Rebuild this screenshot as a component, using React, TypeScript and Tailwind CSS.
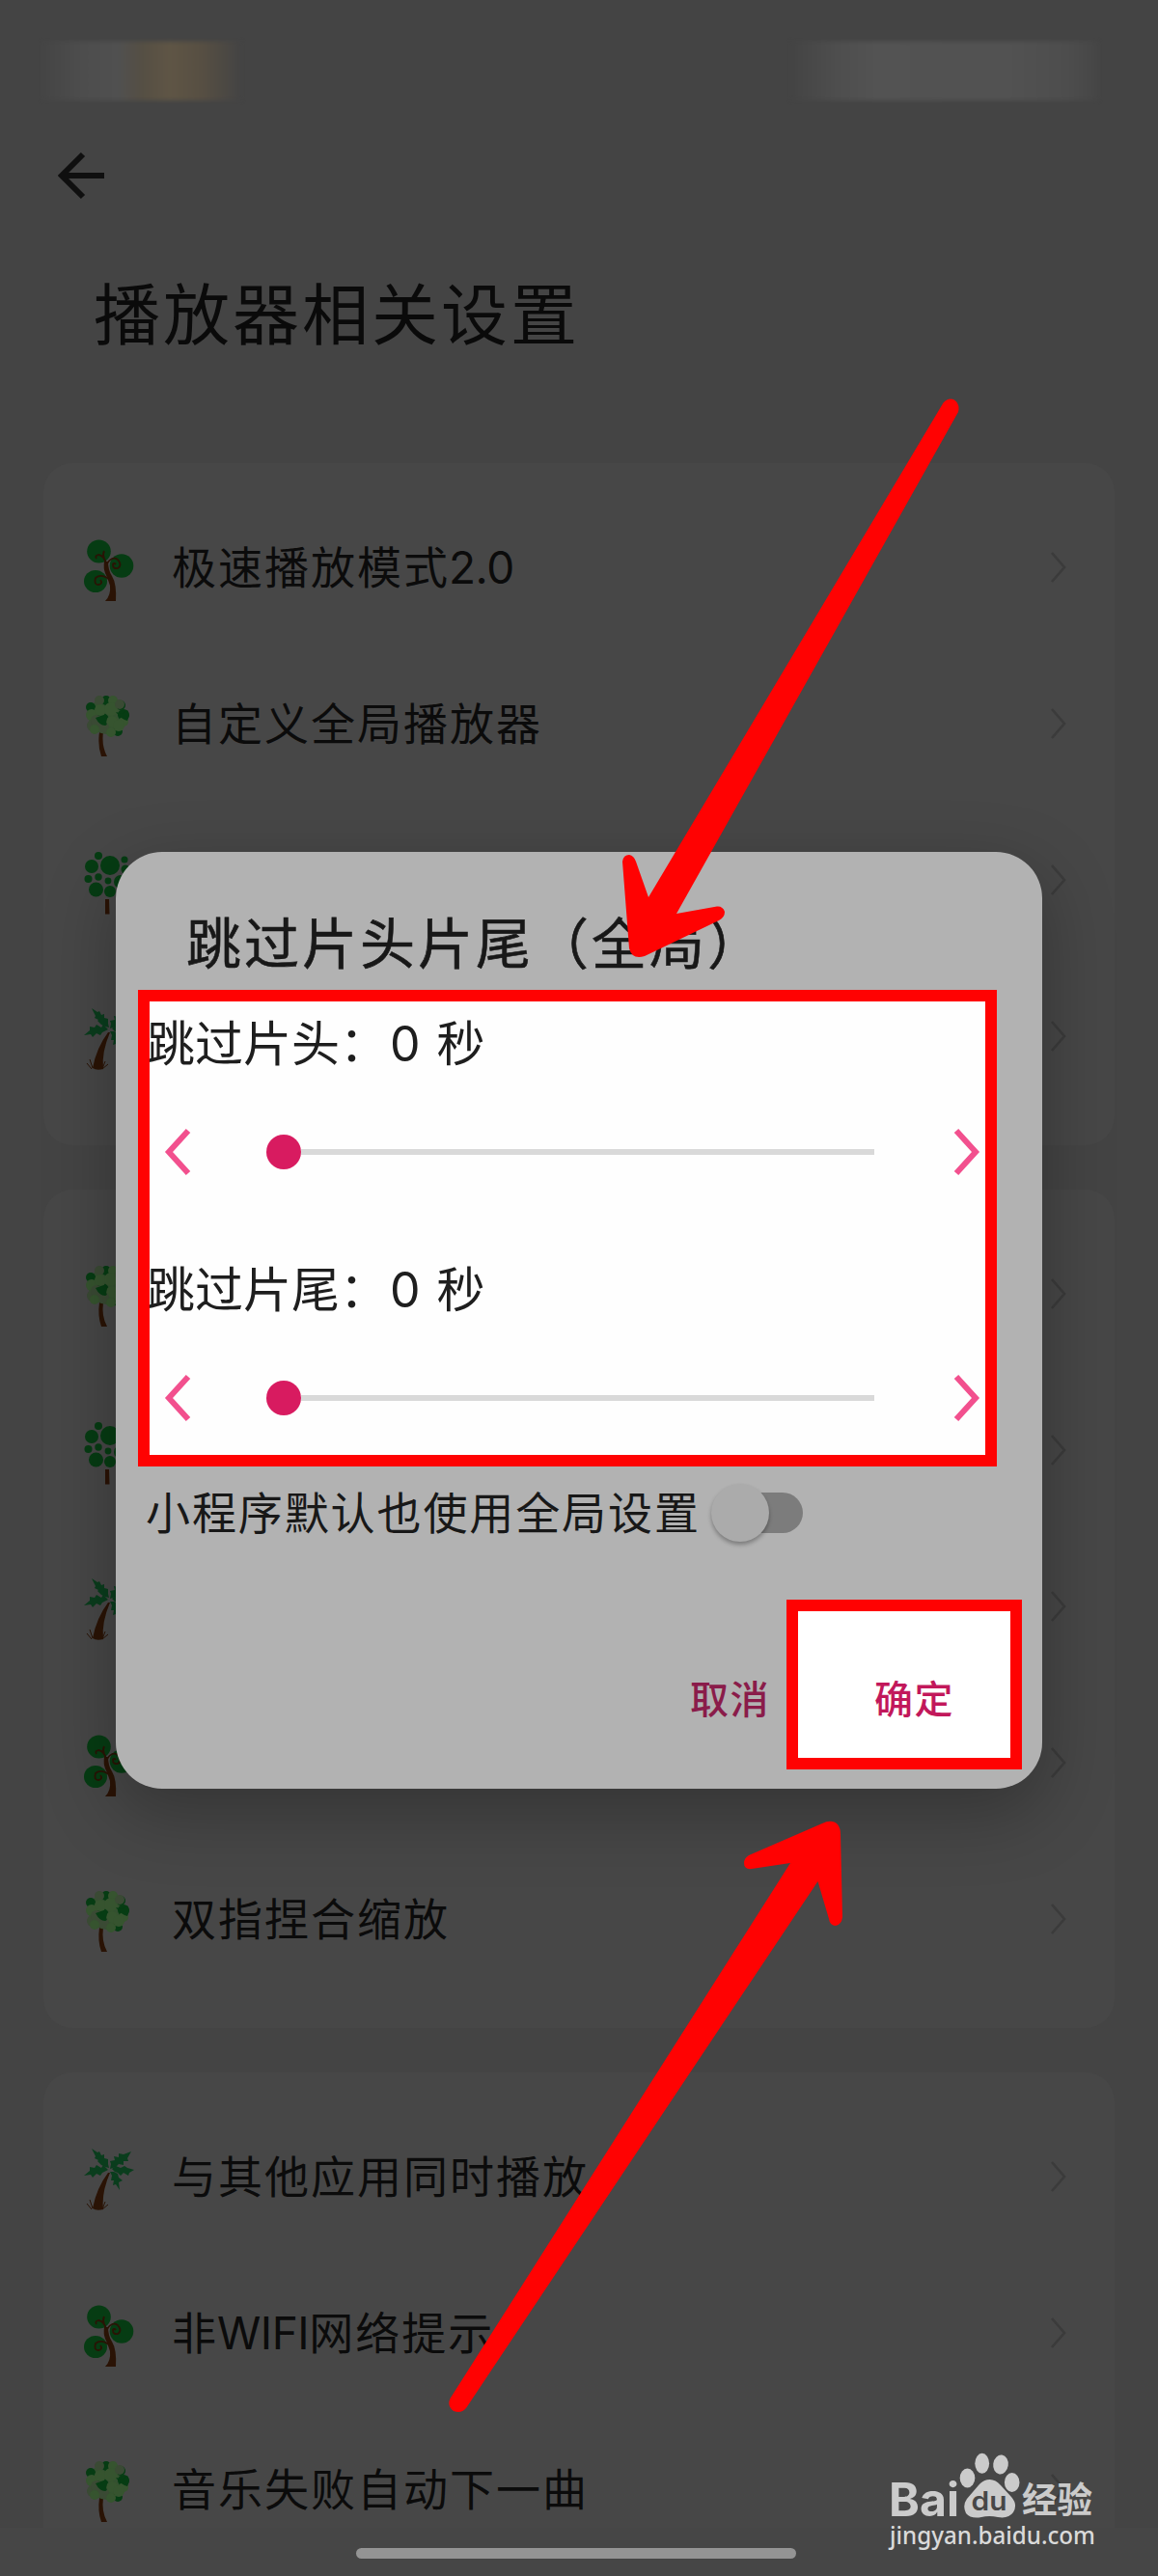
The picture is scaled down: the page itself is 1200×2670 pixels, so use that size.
import { ReactNode } from "react";

function CurlyTree() {
  return (
    <svg viewBox="0 0 52 66" className="mt-[7px] h-[66px] w-[52px]">
      <g fill="#063c13">
        <ellipse cx="15.5" cy="12.5" rx="12.3" ry="12" />
        <ellipse cx="39" cy="27.5" rx="12.3" ry="12.2" />
        <ellipse cx="12" cy="43.5" rx="12" ry="11.5" />
      </g>
      <path d="M22 64 Q28 58 27 48 Q25 41 22 35 Q20 30 21 23 L25 23 Q25 32 29 38 Q34 46 33 64Z" fill="#2a1305" />
      <g fill="none" stroke="#2a1305" strokeWidth="1.8">
        <path d="M23 25 Q21 17 15 16 Q11 17 13 20 M21 20 Q19 16 21 12" />
        <path d="M24 25 Q29 17 35 21 Q40 27 35 30 Q30 31 30 26 Q31 24 33 26" />
        <path d="M27 42 Q18 35 12 40 Q10 47 15 47 Q20 46 17 42" />
      </g>
    </svg>
  );
}

const LEAVES = [
  [16, 5, 5], [30, 5, 5], [8, 20, 6], [9, 31, 6], [17, 15, 6], [28, 14, 7], [37, 9, 5],
  [41, 27, 5], [29, 27, 6], [20, 33, 6], [28, 38, 5], [36, 31, 6], [13, 26, 6], [11, 35, 5],
];

function RoundTree() {
  return (
    <svg viewBox="0 0 52 66" className="mt-[7px] h-[66px] w-[52px]">
      <path d="M16 38 Q14 52 18 63 L24 63 Q18 52 20 38Z" fill="#2a1305" />
      <circle cx="24" cy="21" r="19" fill="#345030" />
      <g fill="#063c13">
        <circle cx="23" cy="5" r="5" />
        <circle cx="7" cy="12" r="5" />
        <circle cx="41" cy="20" r="6" />
        <circle cx="35" cy="37" r="5" />
        <circle cx="19" cy="25" r="7" />
        <circle cx="38" cy="10" r="5" />
      </g>
      {LEAVES.map(([x, y, r], i) => (
        <circle key={i} cx={x} cy={y} r={r} fill={i % 3 === 0 ? "#3a4a34" : "#36542f"} />
      ))}
      <path d="M12 23 Q18 20 24 22 L23 28 Q25 30 22 31 Q16 31 12 23Z" fill="#063c13" />
      <path d="M33 17 Q41 20 45 15 Q48 21 45 26 Q39 25 33 17Z" fill="#063c13" />
    </svg>
  );
}

const DOTS = [
  [8, 15, 7], [15, 4, 4], [27, 14, 10], [42, 8, 3.5], [43, 18, 4.5], [4.5, 28, 4],
  [15, 26, 3.7], [25, 30, 3.4], [38, 31, 7], [12.5, 39, 7.5], [27, 41, 6],
];

function DotTree() {
  return (
    <svg viewBox="0 0 52 66" className="mt-[7px] h-[66px] w-[52px]">
      {DOTS.map(([x, y, r], i) => (
        <circle key={i} cx={x} cy={y} r={r} fill="#063c13" />
      ))}
      <path d="M22 49 H26 L26.5 64.5 H22Z" fill="#2a1305" />
    </svg>
  );
}

function PalmTree() {
  return (
    <svg viewBox="0 0 52 66" className="mt-[7px] h-[66px] w-[52px]">
      <g fill="#0a3d1d">
        <path d="M26 20 L22 19 L18 17 L14 13 L15 12 L11 10 L12 8 L8 0 L14 4 L16 3 L18 7 L21 6 L21 10 L25 11 L25 16Z" />
        <path d="M27 21 L28 16 L27 13 L32 12 L31 8 L36 9 L36 5 L41 6 L49 3 L45 10 L46 13 L41 13 L41 17 L36 16 L33 19Z" />
        <path d="M25 22 L20 17 L18 20 L13 17 L11 20 L6 19 L6 23 L0 28 L7 27 L9 30 L13 26 L17 28 L19 25Z" />
        <path d="M29 21 L33 18 L38 20 L42 18 L45 20 L52 22 L47 25 L46 28 L41 25 L38 28 L35 25 L32 24Z" />
        <path d="M27 24 L31 24 L35 26 L36 30 L40 33 L36 35 L37 43 L33 37 L30 38 L31 33 L28 33 L29 28Z" />
      </g>
      <path d="M25 25 Q13 41 9 62 Q13 65 20 63 Q18 46 27 25Z" fill="#2a1305" />
      <path d="M8 63 L3 57 M9 62 L6 53 M19 63 L22 55 M19 63 L25 58" stroke="#2a1305" strokeWidth="1" />
    </svg>
  );
}

function Row({ icon, label }: { icon: ReactNode; label: string }) {
  // latin runs are set without the extra tracking of the chinese text
  const parts = label.split(/([A-Z0-9.]+)/).filter(Boolean);

  return (
    <div className="flex h-[162px] items-center pl-[42px] pr-[50px]">
      {icon}
      <span className="ml-[39px] flex-1 whitespace-nowrap text-[46px] leading-none tracking-[2px] text-[#0b0b0b]">
        {parts.map((part, i) =>
          /[A-Z0-9]/.test(part) ? (
            <span key={i} className="-ml-[1px] tracking-[-0.5px]">
              {part}
            </span>
          ) : (
            part
          )
        )}
      </span>
      <svg viewBox="0 0 16 32" className="h-[32px] w-[16px]" fill="none" stroke="#3b3b3b" strokeWidth="2.6">
        <path d="M1 1 L14 16 L1 31" />
      </svg>
    </div>
  );
}

function Card({ children }: { children: ReactNode }) {
  return <div className="rounded-[30px] bg-[#474747] pt-[27px] pb-[32px]">{children}</div>;
}

function SkipControl({ label }: { label: string }) {
  return (
    <div className="h-[255px]">
      <div className="flex h-[88px] items-center whitespace-nowrap text-[50px] leading-none text-[#1e1e1e]">
        <span className="-ml-[3px]">{label}</span>
        <span className="ml-[2px]">0</span>
        <span className="ml-[17px]">秒</span>
      </div>
      <div className="mt-[44px] flex h-[48px] items-center pl-[14px] pr-[4px]">
        <svg viewBox="0 0 30 48" className="h-[48px] w-[30px]" fill="none" stroke="#f2508e" strokeWidth="6">
          <path d="M26 2 L6 24 L26 46" />
        </svg>
        <div className="ml-[77px] size-[36px] rounded-full bg-[#d81b60]" />
        <div className="h-[6px] w-[594px] bg-[#d9d9d9]" />
        <svg viewBox="0 0 30 48" className="ml-auto h-[48px] w-[30px]" fill="none" stroke="#f2508e" strokeWidth="6">
          <path d="M4 2 L24 24 L4 46" />
        </svg>
      </div>
    </div>
  );
}

function Dialog() {
  return (
    <div className="absolute left-[120px] top-[883px] flex h-[971px] w-[960px] flex-col rounded-[48px] bg-[#b2b2b2] shadow-[0_24px_70px_4px_rgba(0,0,0,0.25)]">
      <h2 className="h-[143px] whitespace-nowrap pl-[73px] pt-[67px] text-[57px] font-normal leading-[58px] tracking-[3px] text-[#181818] [-webkit-text-stroke:0.6px_#181818]">
        跳过片头片尾（全局）
      </h2>
      <div className="ml-[23px] h-[494px] w-[890px] overflow-hidden border-[12px] border-[#ff0202] bg-[#fefefe]">
        <SkipControl label="跳过片头：" />
        <SkipControl label="跳过片尾：" />
      </div>
      <div className="mt-[14px] flex h-[68px] items-center pl-[31px]">
        <span className="whitespace-nowrap text-[46px] leading-none tracking-[1.9px] text-[#181818]">
          小程序默认也使用全局设置
        </span>
        <div className="ml-[15px] flex h-[42px] w-[91px] items-center rounded-full bg-[#7c7c7c]">
          <div className="-ml-[4px] size-[60px] shrink-0 rounded-full bg-[#ababab] shadow-[0_3px_4px_rgba(0,0,0,0.3)]" />
        </div>
      </div>
      <div className="mt-[56px] flex items-center">
        <button className="ml-[595px] h-[176px] w-[100px] whitespace-nowrap pt-[31px] text-left text-[40px] font-medium leading-none tracking-[1.5px] text-[#8a1c4a]">
          取消
        </button>
        <button className="h-[176px] w-[244px] whitespace-nowrap border-[12px] border-[#ff0202] bg-white pl-[79px] pt-[31px] text-left text-[40px] font-medium leading-none tracking-[1.5px] text-[#c2185b]">
          确定
        </button>
      </div>
    </div>
  );
}

function Arrows() {
  return (
    <svg viewBox="0 0 1200 2670" className="absolute left-0 top-0 h-[2670px] w-[1200px]" fill="#ff0202">
      <path d="M977.5 417.5 Q983 411.5 989 414.5 Q995 419 993 427 L701 947 L743 939.5 Q749 939 751 945 Q751 951 745 954 L668 991 Q655 995 652 983 L645 893 Q646 886 652 886 Q657 887 659 893 L672 930 Z" />
      <path d="M466.5 2486 L819 1931 L779 1937 Q771 1938 771 1931 Q771 1926 776 1923 L852 1890 Q862 1885 868 1891 Q871 1895 871 1901 L873 1987 Q872 1995 866 1996 Q860 1996 859 1989 L847.5 1950 L483 2496 Q478 2502 470 2499 Q463 2494 466.5 2486 Z" />
    </svg>
  );
}

function Watermark() {
  return (
    <svg
      viewBox="0 0 230 120"
      className="absolute left-[920px] top-[2540px] h-[120px] w-[230px] overflow-visible"
      fill="#cbcbcb"
    >
      <text x="1" y="68" fontSize="48" fontWeight="700" textLength="73" lengthAdjust="spacingAndGlyphs" className="font-['Inter']">
        Bai
      </text>
      <ellipse cx="82.5" cy="28.5" rx="7.8" ry="10" />
      <ellipse cx="97.7" cy="13.3" rx="7.4" ry="10.5" />
      <ellipse cx="117" cy="14.5" rx="7.8" ry="10" transform="rotate(8 117 14.5)" />
      <ellipse cx="128.7" cy="33" rx="7.8" ry="10" />
      <path d="M105.5 30 Q112 30 117 36 L128 48 Q135 56 130 64 Q125 71 114 69 Q105 67 97 69 Q86 71 81 65 Q77 57 82 50 L94 36 Q99 30 105.5 30Z" />
      <text x="86.500" y="62" fontSize="27" fontWeight="600" textLength="37" lengthAdjust="spacingAndGlyphs" fill="#474747" className="font-['Inter']">
        du
      </text>
      <text x="139" y="65" fontSize="37" fontWeight="700" textLength="73" lengthAdjust="spacingAndGlyphs" className="font-['Noto_Sans_CJK_SC']">
        经验
      </text>
      <text x="2" y="97" fontSize="25" fontWeight="500" textLength="213" lengthAdjust="spacingAndGlyphs" fill="#dadada" className="font-['Noto_Sans']">
        jingyan.baidu.com
      </text>
    </svg>
  );
}

export default function App() {
  return (
    <div className="relative h-[2670px] w-[1200px] overflow-hidden bg-[#444444] font-['Inter','Noto_Sans_CJK_SC',sans-serif]">
      <div className="flex h-[104px] justify-between pl-[44px] pr-[62px] pt-[43px]">
        <div className="w-[206px] bg-[linear-gradient(90deg,#454545_0%,#4d4d4d_20%,#505050_38%,#554f44_50%,#5f5545_64%,#574f43_80%,#444444_100%)] blur-[2px]" />
        <div className="w-[318px] bg-[linear-gradient(90deg,#444444_0%,#4e4e4e_15%,#535353_28%,#525252_70%,#4d4d4d_90%,#464646_100%)] blur-[2px]" />
      </div>

      <div className="h-[103px] pl-[60px] pt-[53px]">
        <svg viewBox="0 0 50 50" className="h-[50px] w-[50px]" fill="none" stroke="#0f0f0f" strokeWidth="6">
          <path d="M26 3 L4 25 L26 47 M4 25 H48" />
        </svg>
      </div>

      <h1 className="h-[273px] whitespace-nowrap pl-[97px] pt-[82px] text-[69px] leading-[76px] tracking-[3px] text-[#0a0a0a]">
        播放器相关设置
      </h1>

      <div className="mx-[45px] flex flex-col gap-[46px]">
        <Card>
          <Row icon={<CurlyTree />} label="极速播放模式2.0" />
          <Row icon={<RoundTree />} label="自定义全局播放器" />
          <Row icon={<DotTree />} label="" />
          <Row icon={<PalmTree />} label="" />
        </Card>
        <Card>
          <Row icon={<RoundTree />} label="" />
          <Row icon={<DotTree />} label="" />
          <Row icon={<PalmTree />} label="" />
          <Row icon={<CurlyTree />} label="" />
          <Row icon={<RoundTree />} label="双指捏合缩放" />
        </Card>
        <Card>
          <Row icon={<PalmTree />} label="与其他应用同时播放" />
          <Row icon={<CurlyTree />} label="非WIFI网络提示" />
          <Row icon={<RoundTree />} label="音乐失败自动下一曲" />
        </Card>
      </div>

      <div className="absolute bottom-0 left-0 h-[50px] w-full bg-[#464646] pl-[369px] pt-[21px]">
        <div className="h-[11px] w-[456px] rounded-full bg-[#949494]" />
      </div>

      <Dialog />
      <Arrows />
      <Watermark />
    </div>
  );
}
